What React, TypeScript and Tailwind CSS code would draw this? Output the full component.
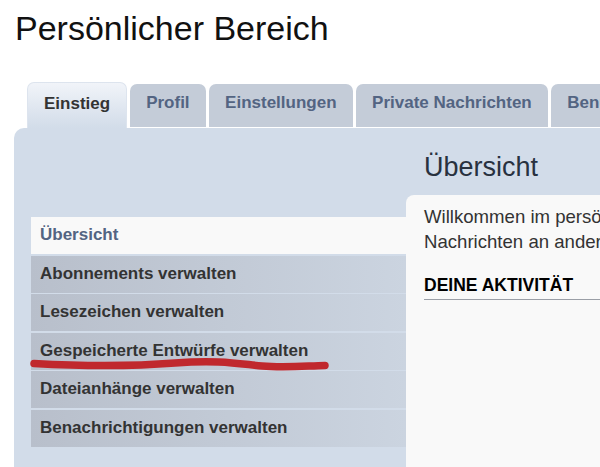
const tabs = [
  { label: 'Einstieg', active: true },
  { label: 'Profil' },
  { label: 'Einstellungen' },
  { label: 'Private Nachrichten' },
  { label: 'Benutzergruppen' },
];

const navItems = [
  { label: 'Übersicht', active: true },
  { label: 'Abonnements verwalten' },
  { label: 'Lesezeichen verwalten' },
  { label: 'Gespeicherte Entwürfe verwalten' },
  { label: 'Dateianhänge verwalten' },
  { label: 'Benachrichtigungen verwalten' },
];

export default function App() {
  return (
    <div className="relative flex h-[467px] w-[600px] flex-col overflow-hidden bg-white font-['Liberation_Sans',Arial,sans-serif]">
      <h1 className="pl-[15px] pt-[8px] text-[34px] leading-[40px] font-normal whitespace-nowrap text-[#111]">
        Persönlicher Bereich
      </h1>

      <div className="ml-[27px] mt-[34px] flex h-[46px] items-end gap-[2.5px] whitespace-nowrap">
        {tabs.map((tab) =>
          tab.active ? (
            <div
              key={tab.label}
              className="h-[46px] shrink-0 rounded-t-[7px] border-x border-t border-[#dde4ee] bg-linear-to-b from-[#f1f4f9] to-[#d2dce9] px-[16px] text-[17px] leading-[42px] font-bold text-[#333]"
            >
              {tab.label}
            </div>
          ) : (
            <div
              key={tab.label}
              className="mb-[1px] h-[43px] shrink-0 rounded-t-[7px] bg-[#c4ccd8] px-[16.5px] text-[17px] leading-[38px] font-bold text-[#536482]"
            >
              {tab.label}
            </div>
          )
        )}
      </div>

      <div className="ml-[14px] flex flex-1 rounded-tl-[10px] bg-[#d2dce9]">
        <ul className="ml-[17px] flex w-[375px] shrink-0 flex-col gap-[1.5px] pt-[89px]">
          {navItems.map((item) => (
            <li
              key={item.label}
              className={`h-[37px] pl-[9px] text-[17px] leading-[36px] font-bold whitespace-nowrap ${
                item.active
                  ? 'bg-[#f9f9f9] text-[#536482]'
                  : 'bg-linear-to-r from-[#b8bfcb] to-[#cbd4e0] text-[#333]'
              }`}
            >
              {item.label}
            </li>
          ))}
        </ul>

        <div className="flex min-w-0 flex-1 flex-col pt-[23px]">
          <h2 className="mb-[12px] h-[32px] pl-[18px] text-[27px] leading-[32px] font-normal text-[#28313f]">
            Übersicht
          </h2>
          <div className="flex-1 rounded-tl-[8px] bg-[#f9f9f9] pl-[18px] pt-[8.5px]">
            <p className="text-[18.6px] leading-[25px] whitespace-nowrap text-[#333]">
              Willkommen im persönlichen Bereich. Hier kannst du dein Profil und deine
              <br />
              Nachrichten an andere Benutzer verwalten.
            </p>
            <h3 className="mt-[21.5px] border-b border-[#9a9ea6] pb-[4px] text-[17.5px] leading-[20px] font-bold whitespace-nowrap text-black">
              DEINE AKTIVITÄT
            </h3>
          </div>
        </div>
      </div>

      <svg
        className="pointer-events-none absolute left-0 top-0"
        width="600"
        height="467"
        viewBox="0 0 600 467"
      >
        <path
          d="M34 363.5 C 80 366, 130 366.5, 175 363 S 240 364, 262 366 S 305 366, 325 365.5"
          fill="none"
          stroke="#c0282d"
          strokeWidth="7.5"
          strokeLinecap="round"
        />
      </svg>
    </div>
  );
}
